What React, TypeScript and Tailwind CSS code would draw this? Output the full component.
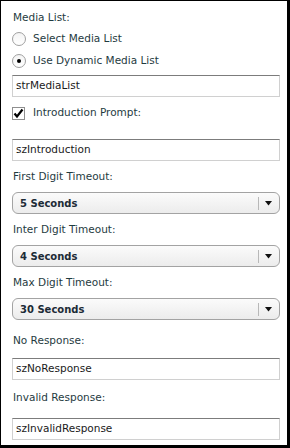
import React from "react";

const font = { fontFamily: '"DejaVu Sans", Tahoma, sans-serif' };

const Label = ({ text, className = "" }: { text: string; className?: string }) => (
  <div className={"h-[14px] leading-[14px] text-[10.5px] text-[#1f3b3f] pl-[1px] " + className}>{text}</div>
);

const TextBox = ({ value, className = "" }: { value: string; className?: string }) => (
  <div
    className={
      "h-[22px] border border-[#d0d0d0] border-t-[#7c7c7c] bg-white pl-[3px] flex items-center text-[10.5px] text-[#1a1a1a] " +
      className
    }
  >
    {value}
  </div>
);

const Select = ({ value, className = "" }: { value: string; className?: string }) => (
  <div
    className={
      "h-[22px] rounded-[6px] border border-[#a3a3a3] bg-gradient-to-b from-[#fbfbfb] to-[#ececec] flex items-center " +
      className
    }
  >
    <div className="flex-1 pl-[7px] text-[10px] font-bold text-[#1c2b36]">{value}</div>
    <div className="w-px h-[13px] bg-[#b8b8b8]" />
    <div className="w-[20px] flex justify-center">
      <svg width="8" height="5" viewBox="0 0 8 5">
        <path d="M0 0 H7 L3.5 4.5 Z" fill="#111" />
      </svg>
    </div>
  </div>
);

const Radio = ({ checked, text, className = "" }: { checked?: boolean; text: string; className?: string }) => (
  <div className={"h-[16px] flex items-center " + className}>
    <div className="w-[14px] h-[14px] rounded-full border border-[#a0a0a0] bg-gradient-to-b from-[#f4f4f4] to-white flex items-center justify-center">
      {checked && <div className="w-[4px] h-[4px] rounded-full bg-black" />}
    </div>
    <span className="ml-[7px] text-[10.5px] text-[#1f3b3f]">{text}</span>
  </div>
);

export default function App() {
  return (
    <div style={font} className="w-[290px] h-[448px] bg-white border-black border-l border-t border-r-[3px] border-b-[3px] pl-[11px] pr-[7px] pt-[9px] flex flex-col">
      <Label text="Media List:" />
      <Radio text="Select Media List" className="mt-[7px]" />
      <Radio checked text="Use Dynamic Media List" className="mt-[6px]" />
      <TextBox value="strMediaList" className="mt-[6px]" />
      <div className="mt-[8px] h-[16px] flex items-center">
        <div className="w-[13px] h-[13px] border border-[#8f8f8f] bg-white flex items-center justify-center">
          <svg width="11" height="11" viewBox="0 0 11 11">
            <path d="M1.5 5.5 L4 8.5 L9.5 1.5" stroke="#000" strokeWidth="2.2" fill="none" />
          </svg>
        </div>
        <span className="ml-[8px] text-[10.5px] text-[#1f3b3f]">Introduction Prompt:</span>
      </div>
      <TextBox value="szIntroduction" className="mt-[18px]" />
      <Label text="First Digit Timeout:" className="mt-[8px]" />
      <Select value="5 Seconds" className="mt-[9px]" />
      <Label text="Inter Digit Timeout:" className="mt-[8px]" />
      <Select value="4 Seconds" className="mt-[9px]" />
      <Label text="Max Digit Timeout:" className="mt-[8px]" />
      <Select value="30 Seconds" className="mt-[9px]" />
      <Label text="No Response:" className="mt-[13px]" />
      <TextBox value="szNoResponse" className="mt-[11px]" />
      <Label text="Invalid Response:" className="mt-[10px]" />
      <TextBox value="szInvalidResponse" className="mt-[14px]" />
    </div>
  );
}
